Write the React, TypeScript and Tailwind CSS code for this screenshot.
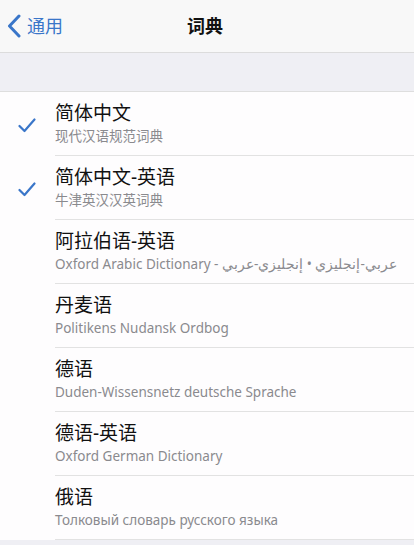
const dictionaries = [
  { title: "简体中文", subtitle: "现代汉语规范词典", checked: true },
  { title: "简体中文-英语", subtitle: "牛津英汉汉英词典", checked: true },
  {
    title: "阿拉伯语-英语",
    subtitle: "Oxford Arabic Dictionary - عربي-إنجليزي • إنجليزي-عربي",
    checked: false,
  },
  { title: "丹麦语", subtitle: "Politikens Nudansk Ordbog", checked: false },
  { title: "德语", subtitle: "Duden-Wissensnetz deutsche Sprache", checked: false },
  { title: "德语-英语", subtitle: "Oxford German Dictionary", checked: false },
  { title: "俄语", subtitle: "Толковый словарь русского языка", checked: false },
];

function Check() {
  return (
    <svg width="18" height="15" viewBox="0 0 18 15" fill="none">
      <path
        d="M1.5 8 L6.5 13 L16.5 1.5"
        stroke="#3a76c9"
        strokeWidth="2.2"
        strokeLinecap="round"
        strokeLinejoin="round"
      />
    </svg>
  );
}

export default function App() {
  return (
    <div
      className="w-[414px] h-[545px] overflow-hidden bg-[#efeff4]"
      style={{ fontFamily: '"Noto Sans", "Noto Sans CJK SC", sans-serif' }}
    >
      <header className="h-[53px] bg-[#f8f8f8] border-b border-[#dcdcdc] flex items-center relative">
        <button className="flex items-center gap-[6px] pl-[7px] text-[#3a76c9]">
          <svg width="14" height="24" viewBox="0 0 14 24" fill="none">
            <path
              d="M12 2 L2.5 12 L12 22"
              stroke="#3a76c9"
              strokeWidth="3"
              strokeLinecap="round"
              strokeLinejoin="round"
            />
          </svg>
          <span className="text-[18px] leading-none">通用</span>
        </button>
        <h1 className="absolute left-[187px] text-[18px] font-bold text-[#111]">词典</h1>
      </header>

      <div className="h-[38px]" />

      <ul className="bg-[#fefdfe] border-t border-[#dedede]">
        {dictionaries.map((d) => (
          <li key={d.title} className="h-[64px] flex">
            <div className="w-[55px] flex items-center pl-[18px] pt-[2px]">{d.checked && <Check />}</div>
            <div className="flex-1 flex flex-col justify-center border-b border-[#e2e2e2]">
              <span className="text-[19px] leading-[23px] text-[#111]">{d.title}</span>
              <span className="mt-[3px] text-[13.5px] leading-[17px] text-[#8a8a8e]">{d.subtitle}</span>
            </div>
          </li>
        ))}
      </ul>
    </div>
  );
}
